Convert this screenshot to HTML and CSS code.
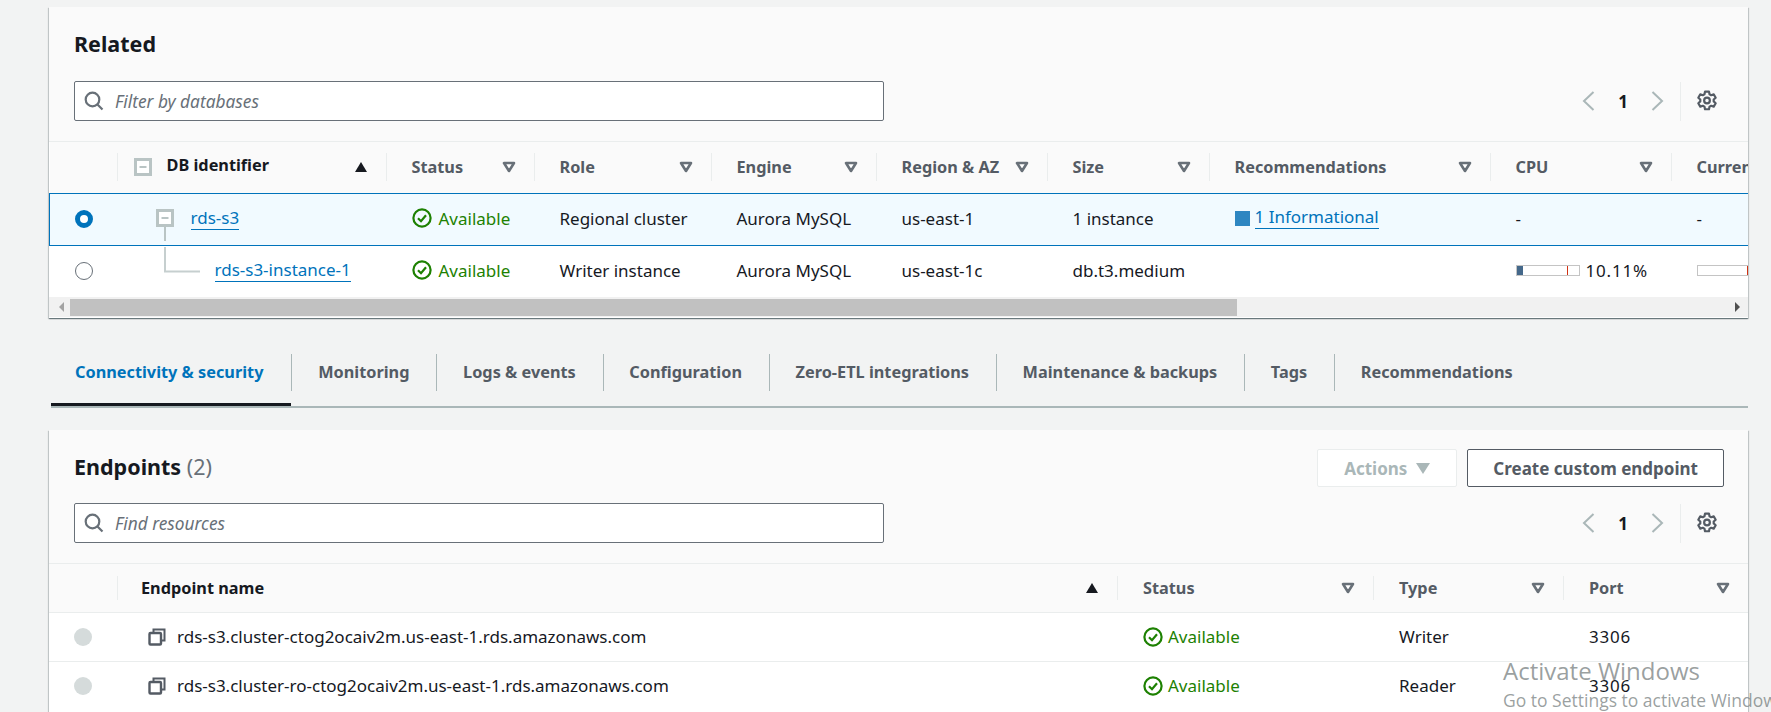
FILE: index.html
```html
<!DOCTYPE html>
<html lang="en">
<head>
    <meta charset="UTF-8">
    <meta name="viewport" content="width=device-width, initial-scale=1.0">
    <title>RDS database details</title>
    <link rel="stylesheet" href="styles.css">
</head>
<body>
    <svg class="defs" width="0" height="0">
        <symbol id="i-search" viewBox="0 0 20 20"><circle cx="8.5" cy="8.5" r="6.8" fill="none" stroke="currentColor" stroke-width="2.2"/><path d="M13 13l5.5 5.5" fill="none" stroke="currentColor" stroke-width="2.2"/></symbol>
        <symbol id="i-check" viewBox="0 0 20 20"><circle cx="10" cy="10" r="8.600" fill="none" stroke="currentColor" stroke-width="2.200"/><path d="M6 10.200l3 3 5-6" fill="none" stroke="currentColor" stroke-width="2.200"/></symbol>
        <symbol id="i-caret" viewBox="0 0 14 12"><path d="M2 2h10l-5 8z" fill="#fff" stroke="currentColor" stroke-width="2.600" stroke-linejoin="round"/></symbol>
        <symbol id="i-up" viewBox="0 0 14 12"><path d="M7 1l6 10H1z" fill="currentColor"/></symbol>
        <symbol id="i-prev" viewBox="0 0 14 20"><path d="M12.500 1l-9.500 9 9.500 9" fill="none" stroke="currentColor" stroke-width="2"/></symbol>
        <symbol id="i-next" viewBox="0 0 14 20"><path d="M1.500 1l9.500 9-9.500 9" fill="none" stroke="currentColor" stroke-width="2"/></symbol>
        <symbol id="i-gear" viewBox="0 0 20 20"><path d="M8.200 1.500h3.600l.5 2.400 1.500.8 2.300-.8 1.800 3.100-1.800 1.600v1.800l1.800 1.600-1.800 3.100-2.300-.8-1.500.8-.5 2.400H8.200l-.5-2.400-1.500-.8-2.300.8-1.800-3.100 1.800-1.600V8.600L2.100 7l1.800-3.100 2.300.8 1.500-.8z" fill="none" stroke="currentColor" stroke-width="2" stroke-linejoin="round"/><circle cx="10" cy="9.500" r="2.600" fill="none" stroke="currentColor" stroke-width="2"/></symbol>
        <symbol id="i-copy" viewBox="0 0 18 18"><path d="M5.500 4.500V1.500h11v11h-3.500" fill="none" stroke="currentColor" stroke-width="2"/><rect x="1.500" y="5" width="11.500" height="11.500" rx="1" fill="none" stroke="currentColor" stroke-width="2.400"/></symbol>
        <symbol id="i-tree" viewBox="0 0 18 18"><rect x="1.500" y="1.500" width="15" height="15" fill="#fff" stroke="#b9c4c4" stroke-width="3"/><path d="M5.500 9h7" stroke="#b9c4c4" stroke-width="2"/></symbol>
    </svg>

    <!-- Related databases -->
    <section class="card card-related">
        <div class="card-head">
            <h2>Related</h2>
            <div class="toolbar">
                <div class="search">
                    <svg class="search-icon"><use href="#i-search"/></svg>
                    <span>Filter by databases</span>
                </div>
                <div class="pager">
                    <svg class="pager-arrow"><use href="#i-prev"/></svg>
                    <span class="pager-num">1</span>
                    <svg class="pager-arrow"><use href="#i-next"/></svg>
                    <span class="pager-sep"><svg class="gear"><use href="#i-gear"/></svg></span>
                </div>
            </div>
        </div>
        <div class="table-wrap">
            <table class="grid grid-related">
                <colgroup>
                    <col class="c-radio"><col class="c-id"><col class="c-status"><col class="c-role"><col class="c-engine"><col class="c-region"><col class="c-size"><col class="c-rec"><col class="c-cpu"><col class="c-cur">
                </colgroup>
                <thead>
                    <tr>
                        <th></th>
                        <th><div class="th-in th-id"><svg class="tree-icon"><use href="#i-tree"/></svg><span class="th-strong">DB identifier</span><svg class="caret up"><use href="#i-up"/></svg></div></th>
                        <th><div class="th-in">Status<svg class="caret"><use href="#i-caret"/></svg></div></th>
                        <th><div class="th-in">Role<svg class="caret"><use href="#i-caret"/></svg></div></th>
                        <th><div class="th-in">Engine<svg class="caret"><use href="#i-caret"/></svg></div></th>
                        <th><div class="th-in">Region &amp; AZ<svg class="caret"><use href="#i-caret"/></svg></div></th>
                        <th><div class="th-in">Size<svg class="caret"><use href="#i-caret"/></svg></div></th>
                        <th><div class="th-in">Recommendations<svg class="caret"><use href="#i-caret"/></svg></div></th>
                        <th><div class="th-in">CPU<svg class="caret"><use href="#i-caret"/></svg></div></th>
                        <th><div class="th-in">Current activity</div></th>
                    </tr>
                </thead>
                <tbody>
                    <tr class="selected">
                        <td><span class="radio radio-on"></span></td>
                        <td><div class="tree tree-root"><svg class="tree-node"><use href="#i-tree"/><path d="M9 18v14" stroke="#b9c4c4" stroke-width="2"/></svg><a class="link">rds-s3</a></div></td>
                        <td><span class="status"><svg class="status-icon"><use href="#i-check"/></svg>Available</span></td>
                        <td>Regional cluster</td>
                        <td>Aurora MySQL</td>
                        <td>us-east-1</td>
                        <td>1 instance</td>
                        <td><span class="info"><span class="info-box"></span><a class="link">1 Informational</a></span></td>
                        <td>-</td>
                        <td>-</td>
                    </tr>
                    <tr>
                        <td><span class="radio"></span></td>
                        <td><div class="tree tree-child"><svg class="tree-line"><path d="M1 -10V14.500H36" fill="none" stroke="#c6cfcf" stroke-width="2"/></svg><a class="link">rds-s3-instance-1</a></div></td>
                        <td><span class="status"><svg class="status-icon"><use href="#i-check"/></svg>Available</span></td>
                        <td>Writer instance</td>
                        <td>Aurora MySQL</td>
                        <td>us-east-1c</td>
                        <td>db.t3.medium</td>
                        <td></td>
                        <td><span class="metric"><span class="meter"><span class="meter-fill" style="width: 10.11%"></span><span class="meter-limit"></span></span><span class="num">10.11%</span></span></td>
                        <td><span class="meter meter-wide"><span class="meter-limit"></span></span></td>
                    </tr>
                </tbody>
            </table>
        </div>
        <div class="scrollbar">
            <span class="arrow arrow-left"></span>
            <span class="thumb"></span>
            <span class="arrow arrow-right"></span>
        </div>
    </section>

    <!-- Tabs -->
    <nav class="tabs">
        <a class="tab active">Connectivity &amp; security</a>
        <a class="tab">Monitoring</a>
        <a class="tab">Logs &amp; events</a>
        <a class="tab">Configuration</a>
        <a class="tab">Zero-ETL integrations</a>
        <a class="tab">Maintenance &amp; backups</a>
        <a class="tab">Tags</a>
        <a class="tab">Recommendations</a>
    </nav>

    <!-- Endpoints -->
    <section class="card card-endpoints">
        <div class="card-head card-head-endpoints">
            <div class="title-row">
                <h2>Endpoints <span class="count">(2)</span></h2>
                <div class="actions">
                    <button class="btn btn-disabled">Actions<span class="btn-caret"></span></button>
                    <button class="btn">Create custom endpoint</button>
                </div>
            </div>
            <div class="toolbar">
                <div class="search">
                    <svg class="search-icon"><use href="#i-search"/></svg>
                    <span>Find resources</span>
                </div>
                <div class="pager">
                    <svg class="pager-arrow"><use href="#i-prev"/></svg>
                    <span class="pager-num">1</span>
                    <svg class="pager-arrow"><use href="#i-next"/></svg>
                    <span class="pager-sep"><svg class="gear"><use href="#i-gear"/></svg></span>
                </div>
            </div>
        </div>
        <table class="grid grid-endpoints">
            <colgroup>
                <col class="e-radio"><col class="e-name"><col class="e-status"><col class="e-type"><col class="e-port">
            </colgroup>
            <thead>
                <tr>
                    <th></th>
                    <th><div class="th-in th-name"><span class="th-strong">Endpoint name</span><svg class="caret up"><use href="#i-up"/></svg></div></th>
                    <th><div class="th-in">Status<svg class="caret"><use href="#i-caret"/></svg></div></th>
                    <th><div class="th-in">Type<svg class="caret"><use href="#i-caret"/></svg></div></th>
                    <th><div class="th-in">Port<svg class="caret"><use href="#i-caret"/></svg></div></th>
                </tr>
            </thead>
            <tbody>
                <tr>
                    <td><span class="radio radio-off"></span></td>
                    <td><span class="endpoint"><svg class="copy"><use href="#i-copy"/></svg>rds-s3.cluster-ctog2ocaiv2m.us-east-1.rds.amazonaws.com</span></td>
                    <td><span class="status"><svg class="status-icon"><use href="#i-check"/></svg>Available</span></td>
                    <td>Writer</td>
                    <td><span class="num">3306</span></td>
                </tr>
                <tr>
                    <td><span class="radio radio-off"></span></td>
                    <td><span class="endpoint"><svg class="copy"><use href="#i-copy"/></svg>rds-s3.cluster-ro-ctog2ocaiv2m.us-east-1.rds.amazonaws.com</span></td>
                    <td><span class="status"><svg class="status-icon"><use href="#i-check"/></svg>Available</span></td>
                    <td>Reader</td>
                    <td><span class="num">3306</span></td>
                </tr>
            </tbody>
        </table>
    </section>

    <div class="watermark">
        <div class="wm-big">Activate Windows</div>
        <div class="wm-small">Go to Settings to activate Windows.</div>
    </div>
</body>
</html>
```

FILE: styles.css
```css
* {
    box-sizing: border-box;
}
html, body {
    height: 712px;
    overflow: hidden;
}
body {
    margin: 0;
    padding: 7px 23px 0 49px;
    background: #f2f3f3;
    color: #16191f;
    font-family: "Noto Sans", Arial, sans-serif;
    font-size: 17px;
    position: relative;
}
.defs {
    position: absolute;
}
.card {
    background: #fff;
    box-shadow: 0 1px 1px 0 rgba(0, 28, 36, 0.4), 1px 1px 1px 0 rgba(0, 28, 36, 0.15), -1px 1px 1px 0 rgba(0, 28, 36, 0.15);
    overflow: hidden;
}
.card-related {
    height: 311px;
}
.card-endpoints {
    height: 282px;
}
.card-head {
    background: #fafafa;
    height: 135px;
    padding: 23px 30px 0 25px;
    border-bottom: 1px solid #eaeded;
}
.card-head-endpoints {
    height: 134px;
    padding-top: 19px;
}
h2 {
    margin: 0;
    font-size: 21.5px;
    line-height: 28px;
    font-weight: 700;
}
.count {
    font-weight: 400;
    color: #687078;
}
.toolbar {
    display: flex;
    justify-content: space-between;
    align-items: center;
    margin-top: 23px;
}
.card-head-endpoints .toolbar {
    margin-top: 16px;
}
.search {
    width: 810px;
    height: 40px;
    display: flex;
    align-items: center;
    background: #fff;
    border: 1px solid #687078;
    border-radius: 2px;
    padding-left: 9px;
    color: #687078;
    font-style: italic;
    font-size: 17.3px;
}
.search-icon {
    width: 20px;
    height: 20px;
    color: #687078;
    margin-right: 11px;
}
.pager {
    display: flex;
    align-items: center;
    height: 39px;
}
.pager-arrow {
    width: 14px;
    height: 20px;
    color: #aab7b8;
}
.pager-num {
    width: 56px;
    text-align: center;
    font-weight: 700;
}
.pager-sep {
    display: flex;
    align-items: center;
    height: 39px;
    margin-left: 15px;
    padding-left: 15px;
    border-left: 1px solid #eaeded;
}
.gear {
    width: 22px;
    height: 22px;
    color: #545b64;
}
.table-wrap {
    overflow: hidden;
}
.grid {
    table-layout: fixed;
    border-collapse: collapse;
}
.grid-related {
    width: 1821px;
}
.c-radio { width: 67px; }
.c-id { width: 269px; }
.c-status { width: 148px; }
.c-role { width: 177px; }
.c-engine { width: 165px; }
.c-region { width: 171px; }
.c-size { width: 162px; }
.c-rec { width: 281px; }
.c-cpu { width: 181px; }
.c-cur { width: 200px; }
.grid-endpoints {
    width: 1699px;
}
.e-radio { width: 68px; }
.e-name { width: 1000px; }
.e-status { width: 256px; }
.e-type { width: 190px; }
.e-port { width: 185px; }
.grid th {
    background: #fafafa;
    height: 51px;
    padding: 0;
    text-align: left;
    font-size: 16.3px;
    font-weight: 700;
    color: #545b64;
}
.th-in {
    display: flex;
    align-items: center;
    justify-content: space-between;
    height: 28px;
    border-left: 1px solid #eaeded;
    padding: 0 18px 0 25px;
    white-space: nowrap;
}
.th-strong {
    color: #16191f;
}
.th-id {
    justify-content: flex-start;
    padding-left: 16px;
}
.th-id .th-strong {
    margin: -4px 0 0 15px;
}
.th-id .caret {
    margin-left: auto;
}
.th-name {
    padding-left: 23px;
}
.tree-icon {
    width: 18px;
    height: 18px;
}
.caret {
    width: 14px;
    height: 12px;
    color: #687078;
    flex: none;
}
.caret.up {
    color: #16191f;
}
.grid td {
    height: 52px;
    padding: 0 0 2px 26px;
    white-space: nowrap;
    overflow: hidden;
}
.grid td:first-child {
    padding: 0 0 0 25px;
}
.selected td {
    background: #f1faff;
    border-top: 1px solid #0073bb;
    border-bottom: 1px solid #0073bb;
}
.selected td:first-child {
    border-left: 1px solid #0073bb;
}
.grid-endpoints tbody td {
    height: 49px;
    padding-bottom: 0;
    border-top: 1px solid #eaeded;
}
.grid-endpoints thead th {
    height: 48px;
}
.grid-endpoints .th-in {
    height: 24px;
}
.grid-endpoints .status-icon {
    margin-right: 5px;
}
.radio {
    display: block;
    width: 18px;
    height: 18px;
    border-radius: 50%;
    border: 1.5px solid #687078;
    background: #fff;
}
.radio-on {
    border: 5px solid #0073bb;
}
.radio-off {
    border: none;
    background: #d5dbdb;
}
.tree {
    display: flex;
    align-items: center;
}
.tree-node {
    width: 18px;
    height: 18px;
    overflow: visible;
    margin: 0 17px 0 13px;
}
.tree-line {
    width: 36px;
    height: 26px;
    overflow: visible;
    margin: 0 15px 0 21px;
}
.link {
    color: #0073bb;
    border-bottom: 1px solid #0073bb;
    line-height: 22px;
}
.status {
    display: flex;
    align-items: center;
    color: #1d8102;
}
.status-icon {
    width: 20px;
    height: 20px;
    margin-right: 7px;
}
.info {
    display: flex;
    align-items: center;
}
.info-box {
    width: 15px;
    height: 15px;
    background: #2e86c1;
    margin-right: 5px;
}
.info .link {
    margin-top: -2px;
}
.metric {
    display: flex;
    align-items: center;
}
.num {
    letter-spacing: 0.8px;
}
.meter {
    display: block;
    position: relative;
    width: 64px;
    height: 11px;
    border: 1px solid #c4c4c4;
    background: #fff;
    margin-right: 6px;
}
.meter-fill {
    display: block;
    height: 100%;
    background: #44688a;
}
.meter-limit {
    position: absolute;
    top: 0;
    bottom: 0;
    right: 11px;
    width: 1px;
    background: #d13212;
}
.meter-wide {
    width: 64px;
}
.meter-wide .meter-limit {
    right: 12px;
}
.scrollbar {
    display: flex;
    align-items: center;
    height: 20px;
    background: #f1f1f1;
}
.thumb {
    width: 1167px;
    height: 17px;
    background: #c1c1c1;
    margin-left: 6px;
}
.arrow {
    width: 0;
    height: 0;
    border-top: 5px solid transparent;
    border-bottom: 5px solid transparent;
}
.arrow-left {
    margin-left: 10px;
    border-right: 5px solid #a3a3a3;
}
.arrow-right {
    margin-left: auto;
    margin-right: 8px;
    border-left: 5px solid #505050;
}
.tabs {
    display: flex;
    height: 90px;
    padding-top: 36px;
    border-bottom: 2px solid #aab7b8;
    margin-left: 2px;
    margin-bottom: 22px;
}
.tab {
    position: relative;
    height: 52px;
    padding: 0 26.8px;
    font-size: 16.3px;
    line-height: 37px;
    font-weight: 700;
    color: #545b64;
}
.tab + .tab::before {
    content: "";
    position: absolute;
    left: 0;
    top: 0;
    height: 37px;
    border-left: 1px solid #aab7b8;
}
.tab.active {
    color: #0073bb;
    padding: 0 28px 0 24px;
    box-shadow: inset 0 -3px 0 #16191f;
}
.title-row {
    display: flex;
    justify-content: space-between;
    align-items: flex-start;
}
.title-row h2 {
    margin-top: 4px;
}
.actions {
    display: flex;
    gap: 10px;
    margin-right: -6px;
}
.btn {
    height: 38px;
    padding: 0 25px;
    font: inherit;
    font-weight: 700;
    color: #545b64;
    background: #fff;
    border: 1px solid #545b64;
    border-radius: 2px;
}
.btn-disabled {
    display: flex;
    align-items: center;
    color: #aab7b8;
    border-color: #eaeded;
    padding: 0 26px 0 26px;
}
.btn-caret {
    margin-left: 9px;
    border-left: 7px solid transparent;
    border-right: 7px solid transparent;
    border-top: 11px solid #aab7b8;
}
.endpoint {
    display: flex;
    align-items: center;
    padding-left: 5px;
}
.copy {
    width: 18px;
    height: 18px;
    color: #545b64;
    margin-right: 11px;
}
.watermark {
    position: absolute;
    left: 1503px;
    top: 655px;
    white-space: nowrap;
    color: rgba(110, 118, 118, 0.7);
    font-family: "Open Sans", Arial, sans-serif;
}
.wm-big {
    font-size: 24px;
    line-height: 32px;
}
.wm-small {
    font-size: 17.5px;
    line-height: 26px;
}
```
